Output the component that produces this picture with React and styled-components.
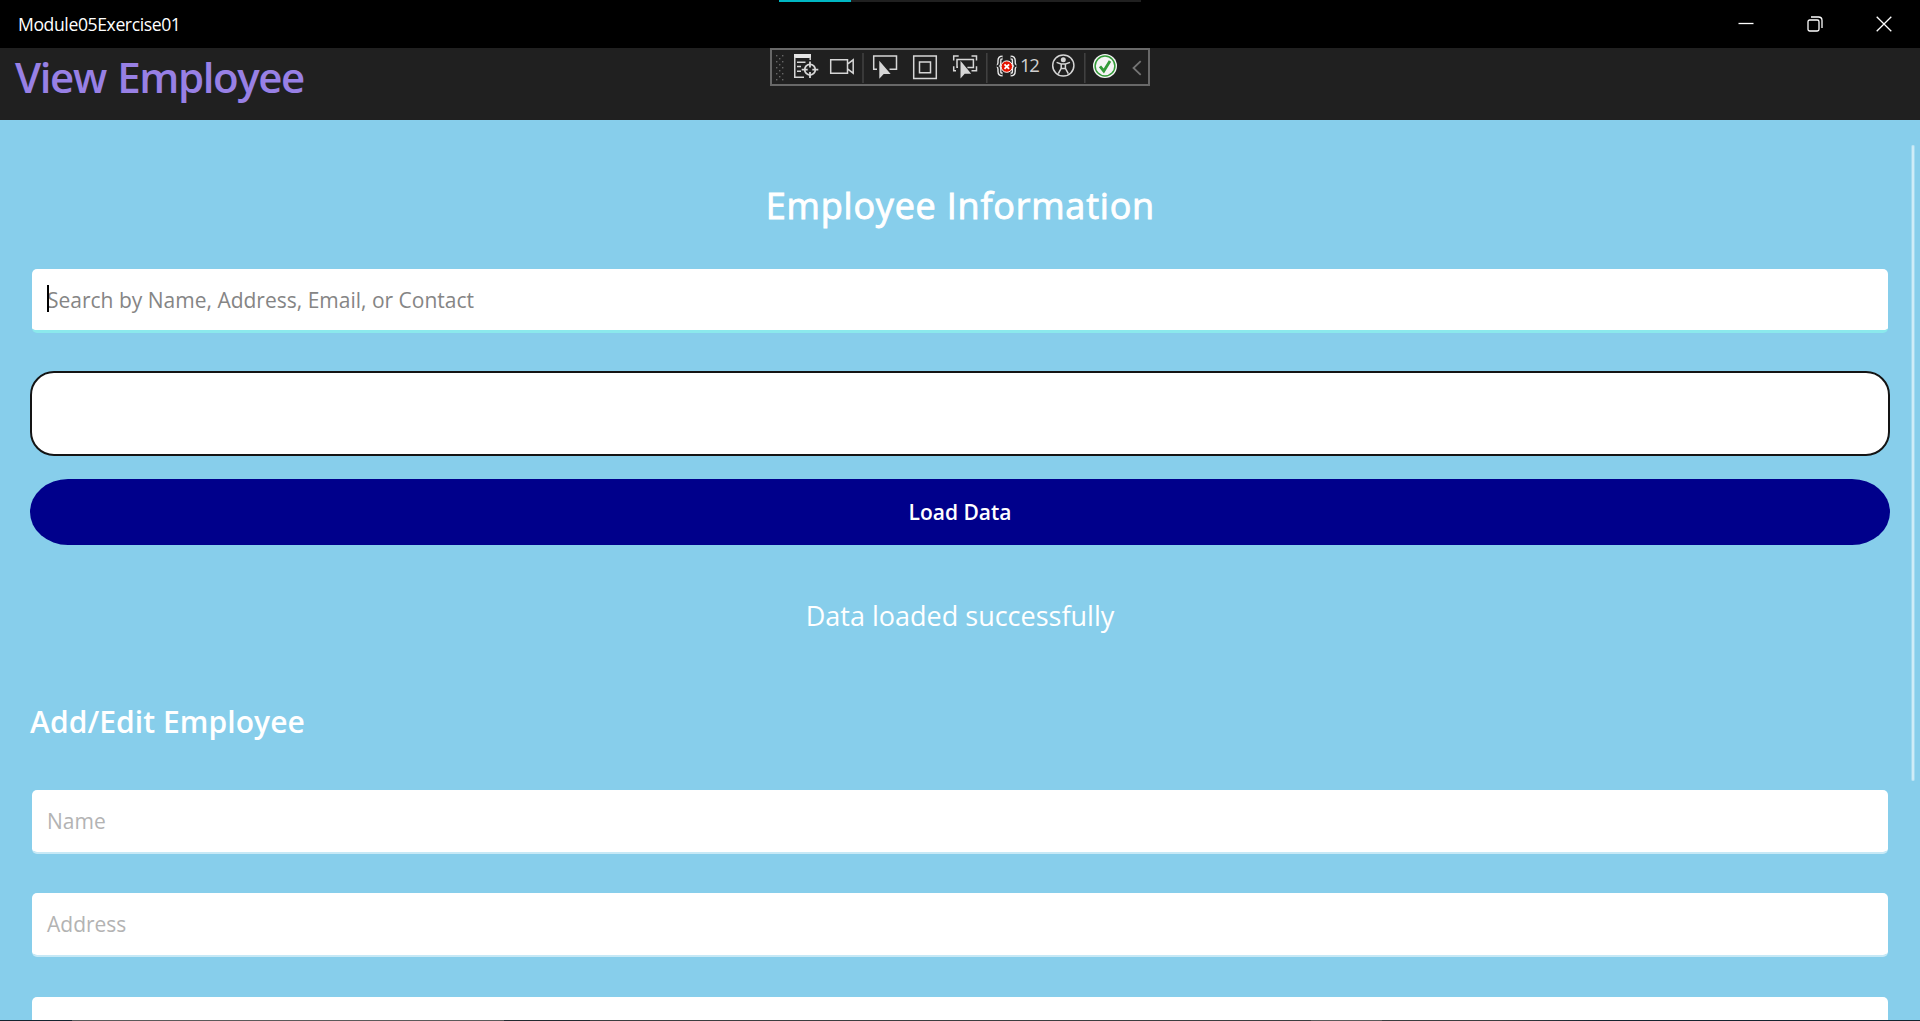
import React from "react";
import styled, { createGlobalStyle } from "styled-components";

const GlobalStyle = createGlobalStyle`
  * { box-sizing: border-box; }
  body { margin: 0; overflow: hidden; background: #87ceeb; }
`;

const Window = styled.div`
  position: relative;
  display: flex;
  flex-direction: column;
  width: 100vw;
  height: 100vh;
  overflow: hidden;
  background: #87ceeb;
  font-family: "Open Sans", "Noto Sans", sans-serif;
`;

const TitleBar = styled.header`
  display: flex;
  flex: none;
  align-items: center;
  justify-content: space-between;
  height: 48px;
  padding: 0 2px 0 18px;
  background: #000;
  color: #fff;
`;

const AppName = styled.span`
  font-size: 17.6px;
  line-height: 24px;
  letter-spacing: -0.4px;
`;

const WindowControls = styled.div`
  display: flex;
`;

const ControlButton = styled.button`
  display: grid;
  place-items: center;
  width: 69px;
  height: 48px;
  padding: 0;
  border: 0;
  background: transparent;
  color: #fff;
`;

const LoadTrack = styled.div`
  position: absolute;
  top: 0;
  left: 779px;
  width: 362px;
  height: 2px;
  background: #202020;
`;

const LoadProgress = styled.div`
  width: 72px;
  height: 2px;
  background: #00b7c3;
`;

const PageHeader = styled.div`
  flex: none;
  height: 72px;
  padding-left: 15px;
  background: #202020;
`;

const PageTitle = styled.h1`
  margin: 0;
  color: #9880e5;
  font-size: 42px;
  font-weight: 600;
  line-height: 58px;
  letter-spacing: -1.4px;
  word-spacing: 2px;
`;

const DebugToolbar = styled.div`
  position: absolute;
  top: 48px;
  left: 770px;
  display: flex;
  width: 380px;
  height: 38px;
  border: 2px solid #686868;
  background: #202020;
`;

const ToolbarArt = styled.svg`
  display: block;
  flex: none;
`;

const ErrorCount = styled.span`
  position: absolute;
  left: 248px;
  top: 3px;
  color: #d0d0d0;
  font-size: 18.5px;
  line-height: 24px;
  letter-spacing: -1.3px;
`;

const Content = styled.main`
  display: flex;
  flex: 1;
  flex-direction: column;
  min-height: 0;
  padding: 61px 30px 0;
  overflow: hidden;
  color: #fff;
`;

const Heading = styled.h2`
  flex: none;
  margin: 0;
  font-size: 36px;
  font-weight: 400;
  line-height: 49px;
  letter-spacing: 0.78px;
  text-align: center;
  text-indent: 0.78px;
  -webkit-text-stroke: 0.9px #fff;
`;

const Field = styled.label`
  position: relative;
  display: flex;
  flex: none;
  align-items: center;
  height: 64px;
  margin: ${(p) => p.$top}px 2px 0;
  padding: 1px 0 0 15px;
  border-bottom: ${(p) => (p.$active ? "3px solid #8be9ec" : "2px solid #c7e9f6")};
  border-radius: 5px;
  background: #fff;
  background-clip: padding-box;
`;

const Placeholder = styled.span`
  color: ${(p) => (p.$active ? "#858585" : "#b3b3b3")};
  font-size: 21px;
  line-height: 29px;
  white-space: nowrap;
`;

const Caret = styled.i`
  position: absolute;
  top: 16px;
  left: 15px;
  width: 2px;
  height: 27px;
  background: #000;
`;

const ResultFrame = styled.section`
  flex: none;
  height: 85px;
  margin-top: 38px;
  border: 2px solid #141414;
  border-radius: 24px;
  background: #fff;
`;

const LoadButton = styled.button`
  flex: none;
  height: 66px;
  margin: 23px 0 0;
  padding: 0;
  border: 0;
  border-radius: 38px / 33px;
  background: #00008b;
  color: #fff;
  font-family: inherit;
  font-size: 21px;
  font-weight: 600;
  line-height: 29px;
`;

const Status = styled.p`
  flex: none;
  margin: 52px 0 0;
  font-size: 27px;
  line-height: 37px;
  text-align: center;
`;

const SectionTitle = styled.h3`
  flex: none;
  margin: 67px 0 0;
  font-size: 30px;
  font-weight: 600;
  line-height: 41px;
  letter-spacing: 0.07px;
`;

const ScrollThumb = styled.div`
  position: absolute;
  top: 145px;
  right: 5px;
  width: 4px;
  height: 636px;
  border-right: 1px solid #a5dbf0;
  border-left: 1px solid #a5dbf0;
  border-radius: 2px;
  background: #cfecf7;
`;

const TaskbarEdge = styled.div`
  position: absolute;
  right: 0;
  bottom: 0;
  left: 0;
  height: 1px;
  background: linear-gradient(
    90deg,
    #152530 0 72px,
    #5a5a5a 72px 504px,
    #222a30 504px 590px,
    #3a3d3f 590px 1311px,
    #5a5a5a 1311px 1382px,
    #3a3d3f 1382px 1500px,
    #152530 1600px
  );
`;

const BRACES =
  "M230.6 7.6c-2.8 0-3.2 1-3.2 3.2v2c0 1.9-1 3.2-2.6 3.2 1.6 0 2.6 1.3 2.6 3.2v2c0 2.2.4 3.2 3.2 3.2M238.6 7.6c2.8 0 3.2 1 3.2 3.2v2c0 1.9 1 3.2 2.6 3.2-1.6 0-2.6 1.3-2.6 3.2v2c0 2.2-.4 3.2-3.2 3.2";

function ToolbarIcons() {
  const dots = [];
  for (let row = 0; row < 9; row++) {
    const xs = row % 2 ? [7] : [4, 10];
    xs.forEach((x) => dots.push(<rect key={`${x}-${row}`} x={x} y={5 + row * 3} width="1.4" height="1.4" />));
  }
  return (
    <ToolbarArt width="376" height="34" viewBox="0 0 376 34" fill="none" stroke="#d6d6d6" strokeWidth="1.5">
      <g fill="#666" stroke="none">{dots}</g>
      <g>
        <path d="M22 4h17v4H22z" fill="#e4e4e4" stroke="none" />
        <path d="M22.75 7v20.2H32M25 12.2h8.5M25 16.5h4M25 21.2h4M38.2 7v3" />
        <circle cx="38" cy="19.7" r="5.3" strokeWidth="1.8" />
        <path d="M38 11.5v6M38 22v6M29.7 19.7h6M40.3 19.7h6" strokeWidth="1.8" />
      </g>
      <path d="M58.7 9.7h16.8v13.6H58.7zM75.5 14.2l5.7-4.4v13.4l-5.7-4.4" />
      <path d="M91 3v30M214.8 3v30M312.8 3v30" stroke="#424242" />
      <path d="M105 19.3h-3.3V6h22.8v13.3h-7" />
      <path d="M107.3 10.7v18l4.4-4.8h7z" fill="#d6d6d6" stroke="none" />
      <path d="M141.7 6h22.6v22.6h-22.6zM147.5 12h11v10.7h-11z" />
      <path d="M181.7 10.5V6h5M199.5 6h5v4.5M204.5 16.2v4.6h-5M181.7 16.2v4.6h2.3M186 17.3h-1V9.4h16.4v8h-6" />
      <path d="M188.5 10.7v17.8l4.2-4.7h6.5z" fill="#d6d6d6" stroke="none" />
      <g>
        <path d={BRACES} stroke="#eee" strokeWidth="4.2" />
        <path d={BRACES} stroke="#2a2a2a" strokeWidth="1.5" />
        <circle cx="234.8" cy="16.6" r="5.7" fill="#e51400" stroke="#fff" strokeWidth="1" />
        <path d="M232.5 14.3l4.6 4.6M237.1 14.3l-4.6 4.6" stroke="#fff" strokeWidth="1.8" />
      </g>
      <g>
        <circle cx="291.3" cy="15.5" r="10.6" />
        <circle cx="291.3" cy="9.7" r="2.5" fill="#d6d6d6" stroke="none" />
        <path d="M284.6 12.4l4.6 1.7v4.2l-2.9 5.4M298 12.4l-4.6 1.7v4.2l2.9 5.4M289.2 14.1h4.2M289.2 18.6h4.2" />
      </g>
      <circle cx="333" cy="16" r="12" fill="#f5f5f5" stroke="none" />
      <circle cx="333" cy="16" r="9.9" stroke="#329a37" strokeWidth="1.5" />
      <path d="M328 16.3l3.8 4.7 6.2-10" stroke="#329a37" strokeWidth="2.8" />
      <path d="M368.7 11.2l-7.2 6.8 7.2 6.8" stroke="#747474" strokeWidth="1.8" />
    </ToolbarArt>
  );
}

export default function App() {
  return (
    <Window>
      <GlobalStyle />
      <TitleBar>
        <AppName>Module05Exercise01</AppName>
        <WindowControls>
          <ControlButton aria-label="Minimize">
            <svg width="16" height="16" fill="none" stroke="currentColor" strokeWidth="1.3"><path d="M.5 7.5h15" /></svg>
          </ControlButton>
          <ControlButton aria-label="Restore">
            <svg width="16" height="16" fill="none" stroke="currentColor" strokeWidth="1.3">
              <rect x="1" y="4" width="11" height="11" rx="1.7" />
              <path d="M4 1h7.5Q15 1 15 4.5V12" />
            </svg>
          </ControlButton>
          <ControlButton aria-label="Close">
            <svg width="16" height="16" fill="none" stroke="currentColor" strokeWidth="1.3"><path d="M.7.7l14.6 14.6M15.3.7L.7 15.3" /></svg>
          </ControlButton>
        </WindowControls>
      </TitleBar>
      <PageHeader>
        <PageTitle>View Employee</PageTitle>
      </PageHeader>
      <Content>
        <Heading>Employee Information</Heading>
        <Field $active $top={39}>
          <Placeholder $active>Search by Name, Address, Email, or Contact</Placeholder>
          <Caret />
        </Field>
        <ResultFrame />
        <LoadButton>Load Data</LoadButton>
        <Status>Data loaded successfully</Status>
        <SectionTitle>Add/Edit Employee</SectionTitle>
        <Field $top={48}><Placeholder>Name</Placeholder></Field>
        <Field $top={39}><Placeholder>Address</Placeholder></Field>
        <Field $top={40} />
      </Content>
      <LoadTrack><LoadProgress /></LoadTrack>
      <DebugToolbar>
        <ToolbarIcons />
        <ErrorCount>12</ErrorCount>
      </DebugToolbar>
      <ScrollThumb />
      <TaskbarEdge />
    </Window>
  );
}
